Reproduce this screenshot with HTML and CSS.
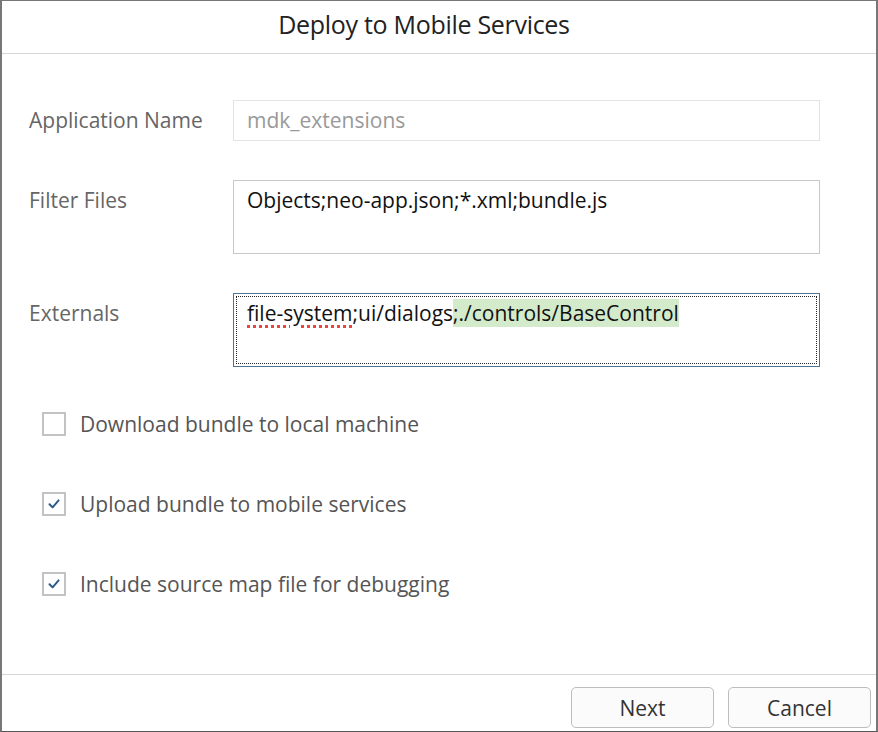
FILE: index.html
```html
<!DOCTYPE html>
<html>
<head>
<meta charset="utf-8">
<link rel="stylesheet" href="styles.css">
</head>
<body>
<div class="dialog">
  <div class="header"><h1 class="title">Deploy to Mobile Services</h1></div>
  <div class="content">
    <div class="form">
      <div class="label l1">Application Name</div>
      <div class="field input disabled">mdk_extensions</div>
      <div class="label l2">Filter Files</div>
      <div class="field area">Objects;neo-app.json;*.xml;bundle.js</div>
      <div class="label l3">Externals</div>
      <div class="field area focus"><div class="focus-ring"><span class="spell">file-system</span>;ui/dialogs<span class="hl">;./controls/BaseControl</span></div></div>
    </div>
    <div class="checks">
      <div class="check"><span class="box"></span><span class="ctext">Download bundle to local machine</span></div>
      <div class="check"><span class="box"><svg viewBox="0 0 20 20" width="20" height="20"><path d="M5.5 10.2 L8.6 13.4 L14.6 6.4" fill="none" stroke="#2b5a86" stroke-width="2" stroke-linecap="round" stroke-linejoin="round"/></svg></span><span class="ctext">Upload bundle to mobile services</span></div>
      <div class="check"><span class="box"><svg viewBox="0 0 20 20" width="20" height="20"><path d="M5.5 10.2 L8.6 13.4 L14.6 6.4" fill="none" stroke="#2b5a86" stroke-width="2" stroke-linecap="round" stroke-linejoin="round"/></svg></span><span class="ctext">Include source map file for debugging</span></div>
    </div>
  </div>
  <div class="footer">
    <button class="btn">Next</button>
    <button class="btn">Cancel</button>
  </div>
</div>
</body>
</html>
```
FILE: styles.css
```css
* { box-sizing: border-box; }
html, body { margin: 0; padding: 0; background: #fff; }
body { font-family: "Open Sans", "Liberation Sans", sans-serif; }
.dialog {
  width: 878px; height: 732px;
  border-top: 1px solid #777;
  border-left: 2px solid #777;
  border-right: 2px solid #777;
  border-bottom: 1px solid #555;
  display: flex; flex-direction: column;
  background: #fff;
}
.header {
  height: 53px;
  border-bottom: 1px solid #d6d6d6;
  display: flex; align-items: center; justify-content: center;
  padding: 0 30px 6px 0;
}
.title { margin: 0; font-weight: 400; font-size: 25px; line-height: 30px; color: #222; letter-spacing: -0.3px; }
.content { flex: 1; padding: 46px 0 0 27px; }
.form {
  display: grid;
  grid-template-columns: 204px 587px;
  row-gap: 39px;
}
.label { font-size: 21px; line-height: 28px; color: #666; padding-top: 6px; }
.field { font-size: 21px; line-height: 28px; padding: 5px 13px; }
.input { height: 41px; border: 1px solid #e3e3e3; color: #999; }
.area { height: 74px; border: 1px solid #c8c8c8; color: #111; }
.area.focus { border: 1px solid #4d7396; padding: 2px; }
.focus-ring { height: 100%; border: 1px dotted #222; padding: 2px 10px; }
.spell { text-decoration: underline dotted #e8463f; text-decoration-thickness: 3px; text-underline-offset: 4px; }
.hl { background: #d3ebcb; }
.checks { margin-top: 45px; padding-left: 13px; display: flex; flex-direction: column; gap: 56px; }
.check { display: flex; align-items: center; gap: 14px; height: 24px; }
.box { width: 24px; height: 24px; border: 2px solid #c3c3c3; display: flex; align-items: center; justify-content: center; background: #fff; flex: none; }
.ctext { font-size: 21px; line-height: 28px; color: #555; }
.footer {
  height: 57px;
  border-top: 1px solid #d6d6d6;
  display: flex; justify-content: flex-end; align-items: flex-start;
  gap: 14px; padding: 12px 5px 0 0;
}
.btn {
  width: 143px; height: 41px;
  border: 1px solid #bdbdbd; border-radius: 5px;
  background: #fbfbfb;
  font-family: "Open Sans", "Liberation Sans", sans-serif;
  font-size: 21px; color: #333; padding: 0;
}
```
